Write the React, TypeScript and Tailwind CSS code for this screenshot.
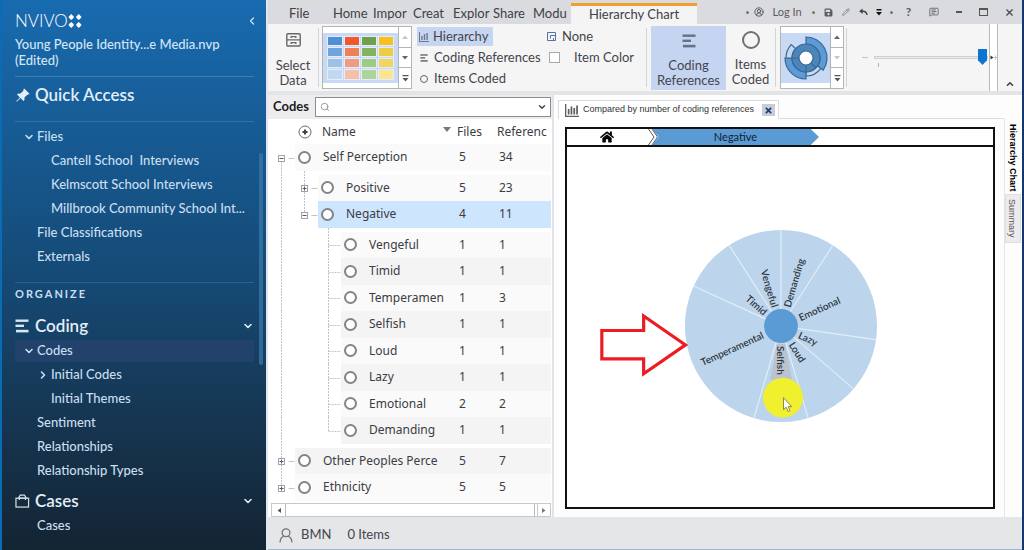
import React from "react";
import {
  ChevronDown,
  ChevronLeft,
  ChevronRight,
  ChevronUp,
  CircleUserRound,
  MessageSquareText,
  Pencil,
  Search,
} from "lucide-react";
import { BsPinAngleFill } from "react-icons/bs";
import { FaHome, FaSave } from "react-icons/fa";

/* ---------- sidebar ---------- */

type NavItemProps = {
  label: string;
  level?: 1 | 2;
  arrow?: "down" | "right";
  active?: boolean;
};

function NavItem({ label, level = 1, arrow, active }: NavItemProps) {
  return (
    <li className="flex h-6 items-center">
      <button
        type="button"
        className={`flex h-[22px] w-full items-center whitespace-pre text-left ${level === 1 ? "pl-2" : "pl-[22px]"} ${active ? "bg-[#22426c]" : ""}`}
      >
        <span className="flex w-3.5 shrink-0 items-center">
          {arrow === "down" && <ChevronDown className="size-3" strokeWidth={3.2} />}
          {arrow === "right" && <ChevronRight className="size-3" strokeWidth={3.2} />}
        </span>
        {label}
      </button>
    </li>
  );
}

function NavHeading({ label, icon }: { label: string; icon: React.ReactNode }) {
  return (
    <button type="button" className="flex h-[27px] w-full items-center text-[17px] font-semibold text-[#e2eef8]">
      <span className="w-5 shrink-0">{icon}</span>
      {label}
      <ChevronDown className="ml-auto size-3" strokeWidth={3.2} />
    </button>
  );
}

function CodingIcon({ className, fill }: { className: string; fill: string }) {
  return (
    <svg viewBox="0 0 14 14" className={className} fill={fill} aria-hidden="true">
      <rect x="0.5" y="0.5" width="13" height="2.4" />
      <rect x="0.5" y="5.6" width="8.5" height="2.4" />
      <rect x="1" y="10.8" width="12.5" height="2.6" />
    </svg>
  );
}

function Sidebar() {
  return (
    <aside className="relative w-[266px] shrink-0 border-l-2 border-[#0a6db3] bg-linear-to-b from-[#186bb0] via-[#154a76] to-[#132433] pr-3 pl-[13px] text-[13px] font-medium text-[#c9dff0]">
      <header className="border-b border-[#3b7cb4] pt-2.5 pb-2 text-[#d3e6f5]">
        <div className="flex h-[22px] items-center">
          <span className="text-[17px] leading-5 font-light text-white">NVIVO</span>
          <svg viewBox="0 0 14 14" className="size-3.5" fill="#fff" aria-hidden="true">
            <path d="M3.2 0 5 1.8 6 3 5 4.4 3.2 6 1.6 4.4 0.4 3 1.6 1.8zM10.8 0 12.4 1.8 13.6 3 12.4 4.4 10.8 6 9 4.4 8 3 9 1.8zM3.2 8 5 9.6 6 11 5 12.2 3.2 14 1.6 12.2 0.4 11 1.6 9.6zM10.8 8 12.4 9.6 13.6 11 12.4 12.2 10.8 14 9 12.2 8 11 9 9.6z" />
          </svg>
          <button type="button" aria-label="Collapse navigation" className="-mr-1 ml-auto">
            <ChevronLeft className="size-3" strokeWidth={2.5} />
          </button>
        </div>
        <p className="mt-1 leading-4">
          Young People Identity...e Media.nvp
          <br />
          (Edited)
        </p>
      </header>

      <div className="border-b border-[#3373a9] pb-2">
        <button type="button" className="flex h-9 items-center text-[17px] font-semibold text-[#e2eef8]">
          <span className="w-5">
            <BsPinAngleFill className="size-[15px]" />
          </span>
          Quick Access
        </button>
      </div>

      <nav aria-label="Project">
        <ul className="pt-[3px]">
          <NavItem label="Files" arrow="down" />
          <NavItem label="Cantell School  Interviews" level={2} />
          <NavItem label="Kelmscott School Interviews" level={2} />
          <NavItem label="Millbrook Community School Int..." level={2} />
          <NavItem label="File Classifications" />
          <NavItem label="Externals" />
        </ul>

        <h2 className="mt-[13px] mb-1.5 flex h-6 items-center border-t border-[#2c628f] text-[11px] font-bold tracking-[2px]">
          ORGANIZE
        </h2>
        <NavHeading label="Coding" icon={<CodingIcon className="size-3.5" fill="#d3e8f3" />} />
        <ul>
          <NavItem label="Codes" arrow="down" active />
          <NavItem label="Initial Codes" level={2} arrow="right" />
          <NavItem label="Initial Themes" level={2} />
          <NavItem label="Sentiment" />
          <NavItem label="Relationships" />
          <NavItem label="Relationship Types" />
        </ul>
        <div className="mt-1">
          <NavHeading
            label="Cases"
            icon={
              <svg viewBox="0 0 16 15" className="h-3.5 w-[15px]" fill="none" stroke="#d3dfe8" strokeWidth="1.3" aria-hidden="true">
                <rect x="1" y="4.5" width="13.5" height="9.5" />
                <path d="M4.5 6.5V2.8L5.6 1.2H10L11.2 2.8V6.5M3 4.4H13" />
              </svg>
            }
          />
          <ul>
            <NavItem label="Cases" />
          </ul>
        </div>
      </nav>
      <div className="absolute top-[153px] right-[3px] h-[212px] w-1 rounded-full bg-[#3d7aab]/70" />
    </aside>
  );
}

/* ---------- title bar ---------- */

const menuTabs = ["Home", "Impor", "Creat", "Explor", "Share", "Modu"];

function Dot() {
  return <span className="flex w-2.5 justify-center"><span className="size-[3px] rounded-full bg-[#777]" /></span>;
}

function TitleBar() {
  return (
    <div className="flex h-6 shrink-0 bg-[#dadbde] text-[13px] whitespace-nowrap text-[#3f3f46]">
      <div className="flex pt-1 pl-[21px]">
        <button type="button" className="w-11 text-left">File</button>
        {menuTabs.map((tab) => (
          <button key={tab} type="button" className="w-10 text-left">{tab}</button>
        ))}
      </div>
      <button type="button" className="mt-[3px] -ml-0.5 w-[126px] border-t-[3px] border-[#f0a02c] bg-[#f4f4f5] pb-0.5 leading-4">
        Hierarchy Chart
      </button>
      <div className="ml-auto flex items-center text-[#5c5c60]">
        <Dot />
        <span className="flex w-3.5 justify-center"><CircleUserRound className="size-2.5" strokeWidth={2.4} /></span>
        <button type="button" className="w-[42px] text-[11px]">Log In</button>
        <Dot />
        <button type="button" aria-label="Save" className="flex w-5 justify-center"><FaSave className="size-[9px]" /></button>
        <button type="button" aria-label="Edit" className="flex w-4 justify-center text-[#8e8e92]"><Pencil className="size-2" strokeWidth={3} /></button>
        <button type="button" aria-label="Undo" className="flex w-[18px] justify-center">
          <svg viewBox="0 0 9 8" className="h-2 w-[9px]" aria-hidden="true">
            <path d="M3.6 0.4V6L0.2 3.2z" fill="#444" />
            <path d="M3 3.2Q7.4 2.6 8 7" fill="none" stroke="#444" strokeWidth="1.5" />
          </svg>
        </button>
        <button type="button" aria-label="Customize toolbar" className="flex w-3.5 justify-center">
          <svg viewBox="0 0 6 7" className="h-[7px] w-1.5" fill="#111" aria-hidden="true">
            <path d="M0.5 0h5v1.4h-5zM0 3h6L3 6.6z" />
          </svg>
        </button>
        <Dot />
        <button type="button" aria-label="Help" className="w-[25px] text-xs font-bold">?</button>
        <button type="button" aria-label="Feedback" className="flex w-[25px] justify-center"><MessageSquareText className="size-2.5" /></button>
        <button type="button" aria-label="Minimize" className="flex w-[25px] justify-center"><span className="h-0.5 w-1.5 bg-[#555]" /></button>
        <button type="button" aria-label="Maximize" className="flex w-[25px] justify-center"><span className="h-2 w-[9px] border border-t-2 border-[#555]" /></button>
        <button type="button" aria-label="Close" className="flex w-[26px] justify-center">
          <svg viewBox="0 0 8 8" className="size-[7px]" stroke="#4c4c50" strokeWidth="1.5" aria-hidden="true">
            <path d="M0.5 0.5 7.5 7.5M7.5 0.5 0.5 7.5" />
          </svg>
        </button>
      </div>
    </div>
  );
}

/* ---------- ribbon ---------- */

function Divider() {
  return <div className="my-1 w-px shrink-0 bg-[#d4d4d6]" />;
}

function GalleryButtons({ dim }: { dim: "up" | "down" }) {
  const base = "flex h-[21px] items-center justify-center border-b border-[#b4b4b6] last:h-5 last:border-b-0";
  return (
    <div className="flex w-[13px] flex-col border-l border-[#b4b4b6]">
      <button type="button" aria-label="Scroll up" className={base}>
        <svg viewBox="0 0 6 4" className="h-1 w-1.5" fill={dim === "up" ? "#c6c6c8" : "#666"}><path d="M0 4 3 0.5 6 4z" /></svg>
      </button>
      <button type="button" aria-label="Scroll down" className={base}>
        <svg viewBox="0 0 6 4" className="h-1 w-1.5" fill={dim === "down" ? "#c6c6c8" : "#666"}><path d="M0 0h6L3 3.5z" /></svg>
      </button>
      <button type="button" aria-label="More" className={base}>
        <svg viewBox="0 0 7 7" className="size-[7px]" fill="#555"><path d="M0.5 0h6v1.2h-6zM0.5 3h6L3.5 6.5z" /></svg>
      </button>
    </div>
  );
}

const swatches = [
  ["#4f8fd3", "#f0582c", "#6f9f4b", "#f7bf1f"],
  ["#6ea5dc", "#f07f55", "#83b361", "#ecce45"],
  ["#9cc2e8", "#f39b80", "#9dcb86", "#efd75f"],
  ["#c0d8f2", "#f6bfa8", "#aed39b", "#fbe592"],
];

function polar(cx: number, cy: number, r: number, deg: number) {
  const a = ((deg - 90) * Math.PI) / 180;
  return `${(cx + r * Math.cos(a)).toFixed(2)} ${(cy + r * Math.sin(a)).toFixed(2)}`;
}

function ring(cx: number, cy: number, r0: number, r1: number, a0: number, a1: number) {
  const large = a1 - a0 > 180 ? 1 : 0;
  return `M${polar(cx, cy, r1, a0)}A${r1} ${r1} 0 ${large} 1 ${polar(cx, cy, r1, a1)}L${polar(cx, cy, r0, a1)}A${r0} ${r0} 0 ${large} 0 ${polar(cx, cy, r0, a0)}Z`;
}

function Ribbon() {
  return (
    <div className="flex h-[67px] shrink-0 bg-[#f5f5f6] text-[13px] leading-[15px] whitespace-nowrap text-[#45454c]">
      <button type="button" className="flex w-[50px] shrink-0 flex-col items-center pt-[9px]">
        <svg viewBox="0 0 15 14" className="mb-[11px] h-3.5 w-[15px]" fill="none" stroke="#68686c" strokeWidth="1.4" aria-hidden="true">
          <rect x="0.8" y="0.8" width="13.4" height="12.2" rx="1" />
          <path d="M1 6.9h13M5.2 4.9V3.6h4.6v1.3M5.2 10.9V9.6h4.6v1.3" />
        </svg>
        Select
        <br />
        Data
      </button>
      <Divider />
      <div className="mt-0.5 ml-[3px] flex h-[63px] w-[90px] shrink-0 border border-[#b4b4b6] bg-white">
        <button type="button" aria-label="Color scheme" className="my-auto grid h-[50px] flex-1 grid-cols-4 gap-px bg-[#c7d9f3] px-1 py-[3px]">
          {swatches.flat().map((color) => (
            <span key={color} className="border border-[#e4edf9]" style={{ backgroundColor: color }} />
          ))}
        </button>
        <GalleryButtons dim="up" />
      </div>

      <div className="ml-[5px] grid shrink-0 auto-rows-[21px] grid-cols-[130px_99px] items-center pt-0.5">
        <button type="button" className="flex h-[19px] w-[76px] items-center gap-1 bg-[#c6d6f1] pl-0.5">
          <svg viewBox="0 0 10 10" className="size-2.5" fill="#6b7890" aria-hidden="true">
            <path d="M0 0h1v9h9v1H0zM2.2 4h1.4v4H2.2zM4.8 2h1.4v6H4.8zM7.4 1h1.4v7H7.4z" />
          </svg>
          Hierarchy
        </button>
        <button type="button" className="flex items-center gap-1.5 text-left">
          <svg viewBox="0 0 9 9" className="size-[9px]" fill="none" stroke="#5573a0" aria-hidden="true">
            <path d="M0.5 0.5h8v8h-8zM3.5 3.5h5M3.5 3.5v3M6.5 6v2.5" />
          </svg>
          None
        </button>
        <button type="button" className="flex items-center gap-1.5 pl-[3px] text-left">
          <CodingIcon className="size-2" fill="#666" />
          Coding References
        </button>
        <label className="flex items-center gap-[14px] pl-0.5">
          <input type="checkbox" className="size-[11px] appearance-none border border-[#a9a9ad] bg-white" />
          Item Color
        </label>
        <button type="button" className="flex items-center gap-1.5 pl-[3px] text-left">
          <span className="size-2 rounded-full border border-[#666]" />
          Items Coded
        </button>
      </div>
      <Divider />

      <button type="button" className="mt-0.5 ml-1 flex h-16 w-[75px] shrink-0 flex-col items-center bg-[#c5d5f1] pt-2">
        <CodingIcon className="mb-[10px] size-3.5" fill="#66708a" />
        Coding
        <br />
        References
      </button>
      <button type="button" className="mt-0.5 flex h-16 w-[49px] shrink-0 flex-col items-center pt-[5px]">
        <span className="mb-2 size-[18px] shrink-0 rounded-full border-2 border-[#707074]" />
        Items
        <br />
        Coded
      </button>
      <Divider />
      <div className="mt-0.5 ml-1 flex h-[63px] w-16 shrink-0 border border-[#b4b4b6] bg-white">
        <button type="button" aria-label="Chart style" className="my-auto flex h-[50px] flex-1 items-center justify-center bg-[#c7d9f3]">
          <svg viewBox="0 0 44 44" className="size-11" stroke="#3d6791" strokeWidth="1.2" aria-hidden="true">
            <path d={ring(22, 22, 14, 21, 0, 125)} fill="#5a9bd8" />
            <path d={ring(22, 22, 14, 18, 125, 180)} fill="#c9daf0" />
            <path d={ring(22, 22, 14, 21, 180, 270)} fill="#5a9bd8" />
            <path d={ring(22, 22, 14, 20, 270, 312)} fill="#c3d8f0" />
            <circle cx="22" cy="22" r="10.5" fill="none" stroke="#4a85bb" strokeWidth="7" />
            <circle cx="22" cy="22" r="14" fill="none" />
            <circle cx="22" cy="22" r="7" fill="#fff" />
            <path d="M8 22h7M27 27l5 5M22 29v7" />
          </svg>
        </button>
        <GalleryButtons dim="down" />
      </div>
      <div className="my-1 ml-0.5 w-px bg-[#d4d4d6]" />

      <div className="flex min-w-0 flex-1">
        <div className="relative flex min-w-0 flex-1 items-center gap-1.5 pl-[15px]">
          <span className="h-px w-1.5 shrink-0 bg-[#b9c9dc]" />
          <input
            type="range"
            aria-label="Label size"
            defaultValue={100}
            className="h-4 w-full min-w-0 appearance-none bg-transparent [&::-webkit-slider-runnable-track]:h-[3px] [&::-webkit-slider-runnable-track]:border [&::-webkit-slider-runnable-track]:border-[#d0d0d2] [&::-webkit-slider-runnable-track]:bg-[#ebebeb] [&::-webkit-slider-thumb]:-mt-2 [&::-webkit-slider-thumb]:h-4 [&::-webkit-slider-thumb]:w-[9px] [&::-webkit-slider-thumb]:appearance-none [&::-webkit-slider-thumb]:bg-[#0a76d2] [&::-webkit-slider-thumb]:[clip-path:polygon(0_0,100%_0,100%_70%,50%_100%,0_70%)]"
          />
          <span className="absolute top-[39px] left-[31px] h-1 w-px bg-[#b5b5b8]" />
        </div>
        <div className="ml-px flex w-[9px] items-center justify-center border-x border-[#b9b9bb] bg-white">
          <svg viewBox="0 0 7 7" className="size-[7px]" aria-hidden="true">
            <path d="M0.5 1.5v4l3-2z" fill="#333" />
            <path d="M3.5 3.5h3.5M5.5 1.5v4" stroke="#b9c9dc" />
          </svg>
        </div>
        <button type="button" aria-label="Collapse ribbon" className="flex w-6 items-end justify-center pb-0.5">
          <ChevronUp className="size-2.5" strokeWidth={4} />
        </button>
      </div>
    </div>
  );
}

/* ---------- codes list ---------- */

type Code = {
  name: string;
  files: number;
  refs: number;
  level: 0 | 1 | 2;
  toggle?: "open" | "closed";
  gap?: boolean;
  selected?: boolean;
  shaded?: boolean;
  last?: boolean;
};

const codes: Code[] = [
  { name: "Self Perception", files: 5, refs: 34, level: 0, toggle: "open" },
  { name: "Positive", files: 5, refs: 23, level: 1, toggle: "closed", gap: true },
  { name: "Negative", files: 4, refs: 11, level: 1, toggle: "open", selected: true },
  { name: "Vengeful", files: 1, refs: 1, level: 2, gap: true },
  { name: "Timid", files: 1, refs: 1, level: 2, shaded: true },
  { name: "Temperamen", files: 1, refs: 3, level: 2 },
  { name: "Selfish", files: 1, refs: 1, level: 2, shaded: true },
  { name: "Loud", files: 1, refs: 1, level: 2 },
  { name: "Lazy", files: 1, refs: 1, level: 2, shaded: true },
  { name: "Emotional", files: 2, refs: 2, level: 2 },
  { name: "Demanding", files: 1, refs: 1, level: 2, shaded: true, last: true },
  { name: "Other Peoples Perce", files: 5, refs: 7, level: 0, toggle: "closed", gap: true, shaded: true },
  { name: "Ethnicity", files: 5, refs: 5, level: 0, toggle: "closed", last: true },
];

const guideWidths = [27, 50, 73];

function TreeGuide({ code, height, first }: { code: Code; height: number; first: boolean }) {
  const width = guideWidths[code.level];
  const top = code.gap ? 4 : 0;
  const mid = top + Math.round((height - top) / 2) + 0.5;
  const box = code.level === 0 ? 13.5 : 36.5;
  const finalRoot = code.level === 0 && code.last;
  return (
    <svg width={width} height={height} className="block shrink-0" fill="none" stroke="#c4c4c8" strokeDasharray="2 1" aria-hidden="true">
      <path d={`M13.5 ${first ? mid : 0}V${finalRoot ? mid : height}`} />
      {code.level === 1 && <path d={`M36.5 0V${code.toggle === "open" ? mid : height}`} />}
      {code.level === 2 && <path d={`M60.5 0V${code.last ? mid : height}M60.5 ${mid}H73`} />}
      {code.toggle && (
        <g strokeDasharray="none">
          <path d={`M${box + 7} ${mid}h6`} />
          <rect x={box - 3} y={mid - 3} width="6" height="6" fill="#fff" stroke="#a2a2a8" />
          <path d={`M${box - 2} ${mid}h4`} stroke="#4d5b78" />
          {code.toggle === "closed" && <path d={`M${box} ${mid - 2}v4`} stroke="#4d5b78" />}
        </g>
      )}
    </svg>
  );
}

function CodesPanel() {
  return (
    <section className="flex w-[286px] shrink-0 flex-col border-r-2 border-[#e3e4e8] bg-white">
      <div className="flex h-6 items-center bg-[#ededf0] pr-px pl-[5px]">
        <label htmlFor="code-search" className="w-[42px] text-[13px] font-bold text-[#1c1c1f]">Codes</label>
        <div className="flex h-5 flex-1 items-center border border-[#8b8b90] bg-white pr-[3px] pl-1">
          <Search className="size-2.5 text-[#8a8a90]" />
          <input id="code-search" type="text" className="min-w-0 flex-1 px-1 text-xs outline-none" />
          <button type="button" aria-label="Search options">
            <ChevronDown className="size-2.5 text-[#444]" strokeWidth={3.5} />
          </button>
        </div>
      </div>
      <table className="mr-px table-fixed font-['Noto_Sans','Open_Sans',sans-serif] text-xs text-[#3c3c42]">
        <colgroup>
          <col />
          <col className="w-10" />
          <col className="w-[54px]" />
        </colgroup>
        <thead>
          <tr className="h-[25px]">
            <th className="p-0 text-left font-normal">
              <span className="flex items-center pl-[30px]">
                <svg viewBox="0 0 14 14" className="mr-2.5 size-3.5" fill="none" stroke="#6c6c70" aria-hidden="true">
                  <circle cx="7" cy="7" r="6" />
                  <path d="M7 4.500v5M4.500 7h5" stroke="#444" strokeWidth="2" />
                </svg>
                Name
                <svg viewBox="0 0 8 5" className="mr-1.5 mb-1 ml-auto h-[5px] w-2" fill="#77777c" aria-hidden="true"><path d="M0 0h8L4 5z" /></svg>
              </span>
            </th>
            <th className="p-0 text-left font-normal">Files</th>
            <th className="p-0 text-left font-normal">Referenc</th>
          </tr>
        </thead>
        <tbody>
          {codes.map((code, i) => {
            const tall = i % 2 === 0;
            const cell = `flex items-center ${tall ? "h-[27px]" : "h-[26px]"} ${code.gap ? "mt-1" : ""} ${code.selected ? "bg-[#cde5fd]" : code.shaded ? "bg-[#f4f4f5]" : "bg-[#fafafa]"}`;
            return (
              <tr key={code.name}>
                <td className="p-0">
                  <div className="flex">
                    <TreeGuide code={code} first={i === 0} height={(tall ? 27 : 26) + (code.gap ? 4 : 0)} />
                    <div className={`${cell} min-w-0 flex-1 gap-3 overflow-hidden pb-px pl-[3px] whitespace-nowrap`}>
                      <span className="size-[13px] shrink-0 rounded-full border-2 border-[#838388] bg-white" />
                      {code.name}
                    </div>
                  </div>
                </td>
                <td className="p-0"><div className={`${cell} pb-px pl-0.5`}>{code.files}</div></td>
                <td className="p-0"><div className={`${cell} pb-px pl-0.5`}>{code.refs}</div></td>
              </tr>
            );
          })}
        </tbody>
      </table>
      <div className="mt-auto mr-px ml-[3px] flex h-[14px] items-stretch border border-[#c8c8cb]">
        <button type="button" aria-label="Scroll left" className="flex w-[13px] items-center justify-center">
          <svg viewBox="0 0 4 5" className="h-[5px] w-1" fill="#555"><path d="M4 0v5L0.5 2.5z" /></svg>
        </button>
        <div className="flex-1 border-x border-[#b9b9bc]" />
        <button type="button" aria-label="Scroll right" className="ml-0.5 flex w-[13px] items-center justify-center border-l border-[#c8c8cb]">
          <svg viewBox="0 0 4 5" className="h-[5px] w-1" fill="#777"><path d="M0 0v5l3.5-2.5z" /></svg>
        </button>
      </div>
    </section>
  );
}

/* ---------- hierarchy chart ---------- */

const slices = [
  { name: "Demanding", refs: 1 },
  { name: "Emotional", refs: 2 },
  { name: "Lazy", refs: 1 },
  { name: "Loud", refs: 1 },
  { name: "Selfish", refs: 1 },
  { name: "Temperamental", refs: 3 },
  { name: "Timid", refs: 1 },
  { name: "Vengeful", refs: 1 },
];

function Sunburst() {
  const total = slices.reduce((sum, s) => sum + s.refs, 0);
  let start = 0;
  return (
    <svg viewBox="-215 -179 428 360" className="min-h-0 w-full flex-1" role="img" aria-label="Negative, by number of coding references">
      <circle r="96.5" fill="#bcd5ed" />
      <path d="M-4 18 -11 54H11L4 18z" fill="#b9bec6" opacity="0.8" />
      {slices.map((slice) => {
        const a0 = (start / total) * 360;
        start += slice.refs;
        const mid = (a0 + (start / total) * 360) / 2;
        const left = mid > 181;
        return (
          <g key={slice.name}>
            <path d={`M${polar(0, 0, 17, a0)}L${polar(0, 0, 96, a0)}`} stroke="#e1edf8" strokeWidth="1.2" />
            <text
              transform={`rotate(${left ? mid + 90 : mid - 90})`}
              x={left ? -20 : 20}
              y="4"
              textAnchor={left ? "end" : "start"}
              fontSize="10"
              fontWeight="600"
              fill="#2f353d"
            >
              {slice.name}
            </text>
          </g>
        );
      })}
      <circle r="17" fill="#5b9bd5" />
      <circle cx="2" cy="72" r="20" fill="#f0f02e" />
      <path d="M2.5 72V84L5.2 81.6 7.2 86 9 85.2 7.2 81H10.8z" fill="#fff" stroke="#7b7b4a" strokeWidth="0.9" />
      <path d="M-180 4.5H-138V-10L-96 19-138 48V33H-180Z" fill="#fff" stroke="#ec1c24" strokeWidth="3.2" />
    </svg>
  );
}

function ChartPanel() {
  return (
    <section className="flex min-w-0 flex-1 bg-[#fdfdfd]">
      <div className="flex min-w-0 flex-1 flex-col pt-[5px] pl-1">
        <div className="flex h-[19px]">
          <div className="flex w-[221px] shrink-0 items-center border border-b-0 border-[#dcdcdf] bg-white pl-1.5">
            <svg viewBox="0 0 14 13" className="mr-1 h-[13px] w-3.5 shrink-0" fill="#5d5d62" aria-hidden="true">
              <path d="M0 0h1.3v11.700H14V13H0zM2.800 5h1.700v5.500H2.800zM5.600 2.500h1.700v8H5.600zM8.400 4h1.700v6.500H8.400zM11.200 1.500h1.700v9h-1.700z" />
            </svg>
            <span className="font-['Liberation_Sans',sans-serif] text-[9px] whitespace-nowrap text-[#333]">
              Compared by number of coding references
            </span>
            <button type="button" aria-label="Close tab" className="mr-[3px] ml-auto flex h-3 w-[13px] shrink-0 items-center justify-center bg-[#c9cdd5]">
              <svg viewBox="0 0 8 8" className="size-[7px]" stroke="#17407e" strokeWidth="2" aria-hidden="true"><path d="M1 1l6 6M7 1 1 7" /></svg>
            </button>
          </div>
          <div className="flex-1 border-b border-[#dcdcdf]" />
        </div>
        <div className="mt-2 mr-[9px] mb-2 ml-[7px] flex flex-1 flex-col border-2 border-[#111] bg-white">
          <div className="flex h-[18px] items-stretch border-b-2 border-[#111] text-[11px]">
            <button type="button" aria-label="Home" className="flex w-[79px] items-center justify-center text-black">
              <FaHome className="size-3.5" />
            </button>
            <svg viewBox="0 0 12 16" className="h-4 w-3" fill="none" stroke="#555" aria-hidden="true">
              <path d="M2.5 0 8 8 2.5 16M6 0l5.5 8L6 16" />
            </svg>
            <button
              type="button"
              className="-ml-1.5 w-[167px] bg-[#5b9bd5] leading-4 text-[#14202e] [clip-path:polygon(0_0,95%_0,100%_50%,95%_100%,0_100%,4%_50%)]"
            >
              Negative
            </button>
          </div>
          <Sunburst />
        </div>
      </div>
      <div className="mt-6 flex w-[18px] shrink-0 flex-col items-start border-l border-[#e4e4e6] font-['Liberation_Sans',sans-serif] text-[9px] leading-4 whitespace-nowrap text-[#555]">
        <button type="button" className="h-[75px] w-4 pt-0.5 font-bold text-black [writing-mode:vertical-rl]">Hierarchy Chart</button>
        <button type="button" className="h-[49px] w-4 border border-[#dedee0] bg-[#ececee] [writing-mode:vertical-rl]">Summary</button>
      </div>
    </section>
  );
}

export default function App() {
  return (
    <div className="flex min-h-screen font-['Lato',sans-serif]">
      <Sidebar />
      <main className="flex min-w-0 flex-1 flex-col border-r-2 border-l-2 border-r-[#12386f] border-l-[#e2e6f0]">
        <TitleBar />
        <Ribbon />
        <div className="h-1 shrink-0 bg-[#e3e4e6]" />
        <div className="flex flex-1">
          <CodesPanel />
          <ChartPanel />
        </div>
        <footer className="flex h-[33px] shrink-0 items-center border-b border-[#9db6d2] bg-[#e4e6e8] pt-1 pl-[11px] text-[13px] text-[#45454c]">
          <svg viewBox="0 0 14 15" className="mr-2 h-[15px] w-3.5" fill="none" stroke="#74747a" strokeWidth="1.3" aria-hidden="true">
            <circle cx="7" cy="4.8" r="3.9" />
            <path d="M1 14.5Q1.5 9 4.8 8.4M13 14.5Q12.5 9 9.2 8.4" />
          </svg>
          BMN
          <span className="ml-4">0 Items</span>
        </footer>
      </main>
    </div>
  );
}
